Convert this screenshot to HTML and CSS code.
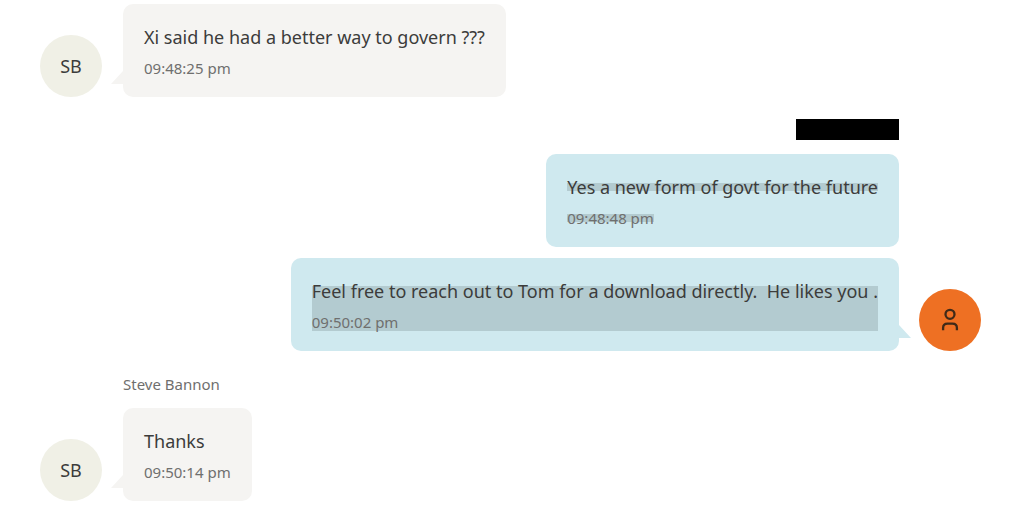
FILE: index.html
```html
<!DOCTYPE html>
<html lang="en">
<head>
<meta charset="utf-8">
<title>Conversation</title>
<link rel="stylesheet" href="styles.css">
</head>
<body>
<main class="chat">
  <section class="group incoming">
    <div class="avatar">SB</div>
    <div class="messages">
      <article class="bubble tail">
        <p class="text">Xi said he had a better way to govern ???</p>
        <time class="time">09:48:25 pm</time>
      </article>
    </div>
  </section>

  <section class="group outgoing">
    <div class="messages">
      <div class="redacted"></div>
      <article class="bubble">
        <p class="text"><span class="mark-line">Yes a new form of govt for the future</span></p>
        <time class="time"><span class="mark-line">09:48:48 pm</span></time>
      </article>
      <article class="bubble tail">
        <div class="mark-block">
          <p class="text">Feel free to reach out to Tom for a download directly.&nbsp; He likes you .</p>
          <time class="time">09:50:02 pm</time>
        </div>
      </article>
    </div>
    <div class="avatar">
      <svg width="18" height="24" viewBox="0 0 18 24" fill="none" stroke="currentColor" stroke-width="2.3" aria-hidden="true">
        <circle cx="9" cy="6.3" r="4.5"/>
        <path d="M2.1 22.3V20Q2.1 15.6 6.5 15.6H11.5Q15.9 15.6 15.9 20V22.3"/>
      </svg>
    </div>
  </section>

  <section class="group incoming">
    <div class="avatar">SB</div>
    <div class="messages">
      <div class="sender">Steve Bannon</div>
      <article class="bubble tail">
        <p class="text">Thanks</p>
        <time class="time">09:50:14 pm</time>
      </article>
    </div>
  </section>
</main>
</body>
</html>
```

FILE: styles.css
```css
* {
  box-sizing: border-box;
}

body {
  margin: 0;
  background: #fff;
  color: #3c3c3b;
  font-family: "Noto Sans", "Open Sans", sans-serif;
}

.chat {
  display: flex;
  flex-direction: column;
  gap: 22px;
  padding: 4px 43px 9px 40px;
}

.group {
  display: flex;
  align-items: flex-end;
  gap: 21px;
}

.outgoing {
  justify-content: flex-end;
  gap: 20px;
}

.messages {
  display: flex;
  flex-direction: column;
  align-items: flex-start;
  gap: 11px;
}

.outgoing .messages {
  align-items: flex-end;
}

.avatar {
  display: flex;
  flex: none;
  align-items: center;
  justify-content: center;
  width: 62px;
  height: 62px;
  border-radius: 50%;
  background: #f0f0e6;
  font-size: 18px;
}

.outgoing .avatar {
  background: #ee7023;
  color: #3f2a18;
}

.bubble {
  --fill: #f5f4f2;
  position: relative;
  padding: 19px 21px;
  border-radius: 10px;
  background: var(--fill);
}

.outgoing .bubble {
  --fill: #cfe9ef;
}

.tail::after {
  content: "";
  position: absolute;
  bottom: 13px;
  width: 12px;
  height: 13px;
  background: var(--fill);
}

.incoming .tail::after {
  right: 100%;
  clip-path: polygon(100% 0, 100% 100%, 0 100%);
}

.outgoing .tail::after {
  left: 100%;
  clip-path: polygon(0 0, 100% 100%, 0 100%);
}

.text {
  margin: 0;
  font-size: 18px;
  line-height: 28px;
}

.time {
  display: block;
  margin-top: 7px;
  color: #6f6f6e;
  font-size: 15px;
  line-height: 20px;
}

.sender {
  color: #6f6f6e;
  font-size: 15px;
  line-height: 22px;
  margin-bottom: 2px;
}

.redacted {
  width: 103px;
  height: 21px;
  margin-bottom: 3px;
  background: #000;
}

.mark-line {
  background: linear-gradient(#b3cbd0, #b3cbd0) 0 8px / 100% 8px no-repeat;
}

.time .mark-line {
  background-position: 0 6px;
}

.mark-block {
  background: linear-gradient(#b3cbd0, #b3cbd0) 0 9px / 100% 45px no-repeat;
}
```
